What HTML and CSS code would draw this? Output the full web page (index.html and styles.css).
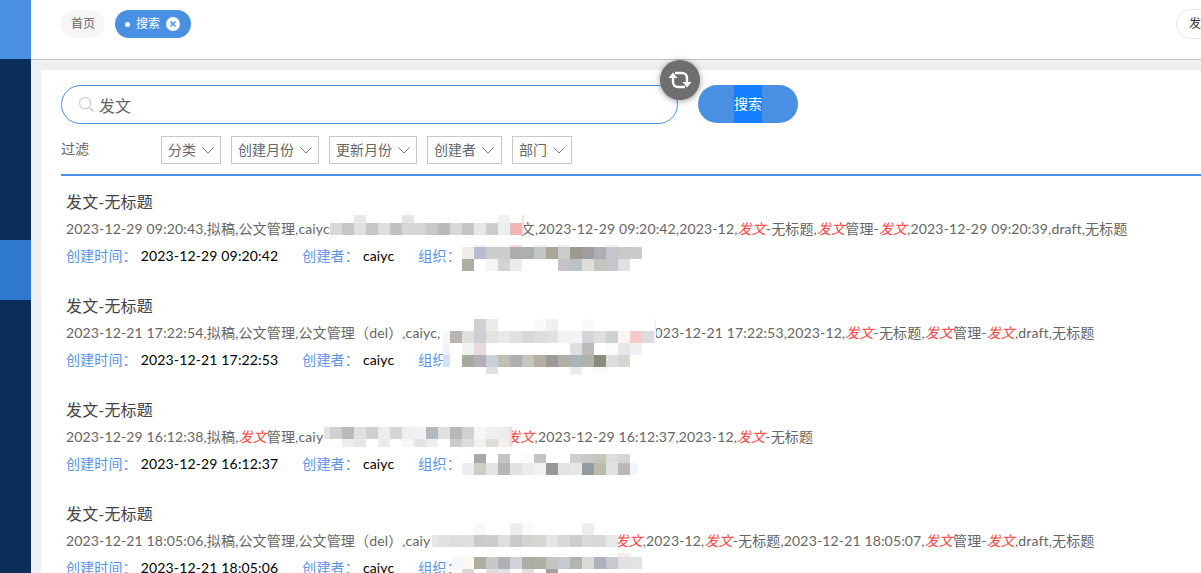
FILE: index.html
```html
<!DOCTYPE html>
<html lang="zh-CN">
<head>
<meta charset="utf-8">
<title>搜索</title>
<link rel="stylesheet" href="styles.css">
</head>
<body>
<div class="app">
  <aside class="sidebar">
    <div class="side-top"></div>
    <div class="side-active"></div>
  </aside>
  <main class="main">
    <header class="tabs">
      <span class="tab">首页</span>
      <span class="tab tab-active"><i class="tab-dot"></i>搜索<svg class="tab-close" viewBox="0 0 14 14"><circle cx="7" cy="7" r="7" fill="#fff"/><path d="M4.500 4.500l5 5M9.500 4.500l-5 5" stroke="#4a90e2" stroke-width="1.500" fill="none"/></svg></span>
      <span class="tab tab-end">发文管理</span>
    </header>
    <section class="content">
      <form class="search">
        <div class="search-box">
          <svg class="search-icon" viewBox="0 0 18 18"><circle cx="7.500" cy="7.500" r="6" stroke="#ccc" stroke-width="1.300" fill="none"/><path d="M12 12l4.500 4.500" stroke="#ccc" stroke-width="1.800" fill="none"/></svg>
          <span class="search-text">发文</span>
        </div>
        <div class="search-btn"><span class="search-btn-label">搜索</span></div>
      </form>
      <div class="filters">
        <span class="filter-label">过滤</span>
        <span class="select">分类<svg class="chev" viewBox="0 0 12 7"><path d="M.5.5l5.500 5.500 5.500-5.500" stroke="#777" fill="none"/></svg></span>
        <span class="select">创建月份<svg class="chev" viewBox="0 0 12 7"><path d="M.5.5l5.500 5.500 5.500-5.500" stroke="#777" fill="none"/></svg></span>
        <span class="select">更新月份<svg class="chev" viewBox="0 0 12 7"><path d="M.5.5l5.500 5.500 5.500-5.500" stroke="#777" fill="none"/></svg></span>
        <span class="select select-wide">创建者<svg class="chev" viewBox="0 0 12 7"><path d="M.5.5l5.500 5.500 5.500-5.500" stroke="#777" fill="none"/></svg></span>
        <span class="select">部门<svg class="chev" viewBox="0 0 12 7"><path d="M.5.5l5.500 5.500 5.500-5.500" stroke="#777" fill="none"/></svg></span>
      </div>
      <div class="results">
        <article class="item">
          <h3 class="item-title">发文-无标题</h3>
          <p class="item-text">2023-12-29 09:20:43,拟稿,公文管理,caiyc<span class="sp sp1"></span>文,2023-12-29 09:20:42,2023-12,<em>发文</em>-无标题,<em>发文</em>管理-<em>发文</em>,2023-12-29 09:20:39,draft,无标题</p>
          <p class="item-meta"><span class="k">创建时间：</span><span class="v">2023-12-29 09:20:42</span><span class="k">创建者：</span><span class="v">caiyc</span><span class="k">组织：</span></p>
        </article>
        <article class="item">
          <h3 class="item-title">发文-无标题</h3>
          <p class="item-text">2023-12-21 17:22:54,拟稿,公文管理,公文管理（del）,caiyc,<span class="sp sp2"></span>023-12-21 17:22:53,2023-12,<em>发文</em>-无标题,<em>发文</em>管理-<em>发文</em>,draft,无标题</p>
          <p class="item-meta"><span class="k">创建时间：</span><span class="v">2023-12-21 17:22:53</span><span class="k">创建者：</span><span class="v">caiyc</span><span class="k">组织：</span></p>
        </article>
        <article class="item">
          <h3 class="item-title">发文-无标题</h3>
          <p class="item-text">2023-12-29 16:12:38,拟稿,<em>发文</em>管理,caiy<span class="sp sp3"></span><em>发文</em>,2023-12-29 16:12:37,2023-12,<em>发文</em>-无标题</p>
          <p class="item-meta"><span class="k">创建时间：</span><span class="v">2023-12-29 16:12:37</span><span class="k">创建者：</span><span class="v">caiyc</span><span class="k">组织：</span></p>
        </article>
        <article class="item">
          <h3 class="item-title">发文-无标题</h3>
          <p class="item-text">2023-12-21 18:05:06,拟稿,公文管理,公文管理（del）,caiy<span class="sp sp4"></span><em>发文</em>,2023-12,<em>发文</em>-无标题,2023-12-21 18:05:07,<em>发文</em>管理-<em>发文</em>,draft,无标题</p>
          <p class="item-meta"><span class="k">创建时间：</span><span class="v">2023-12-21 18:05:06</span><span class="k">创建者：</span><span class="v">caiyc</span><span class="k">组织：</span></p>
        </article>
      </div>
    </section>
  </main>
</div>

<button class="refresh" type="button" aria-label="刷新">
  <svg viewBox="0 0 24 20"><path d="M5 7v5a5 5 0 0 0 5 5h7M19 13V8a5 5 0 0 0-5-5H7" stroke="#fff" stroke-width="2.400" fill="none"/><path d="M.5 8L5 2.500 9.500 8zM14.500 12L19 17.500 23.500 12z" fill="#fff"/></svg>
</button>

<svg class="mosaic" width="1201" height="573" viewBox="0 0 1201 573" shape-rendering="crispEdges" aria-hidden="true">
  <!-- 1: text -->
  <g>
    <rect x="354" y="215" width="12" height="8" fill="#e8e8e8"/><rect x="402" y="215" width="12" height="8" fill="#e4e4e4"/><rect x="498" y="215" width="12" height="8" fill="#f0f0f0"/>
    <rect x="522" y="215" width="2" height="20" fill="#fbdcdc"/>
    <rect x="330" y="223" width="12" height="12" fill="#d9d8d6"/><rect x="342" y="223" width="12" height="12" fill="#c6c6c8"/><rect x="354" y="223" width="12" height="12" fill="#e2e1df"/><rect x="366" y="223" width="12" height="12" fill="#c4c6c8"/><rect x="378" y="223" width="12" height="12" fill="#dededd"/><rect x="390" y="223" width="12" height="12" fill="#c0c2c0"/><rect x="402" y="223" width="12" height="12" fill="#d6d7d7"/><rect x="414" y="223" width="12" height="12" fill="#d7d4d4"/><rect x="426" y="223" width="12" height="12" fill="#c8c8c8"/><rect x="438" y="223" width="12" height="12" fill="#bbbab7"/><rect x="450" y="223" width="12" height="12" fill="#d7d7d7"/><rect x="462" y="223" width="12" height="12" fill="#c6c4c5"/><rect x="474" y="223" width="12" height="12" fill="#e6e6e8"/><rect x="486" y="223" width="12" height="12" fill="#cdcdca"/><rect x="498" y="223" width="12" height="12" fill="#eceded"/><rect x="510" y="223" width="12" height="12" fill="#f3b5b3"/>
  </g>
  <!-- 1: org -->
  <g>
    <rect x="474" y="245" width="12" height="2" fill="#f0f0f5"/><rect x="486" y="245" width="24" height="2" fill="#f8f8f6"/><rect x="510" y="245" width="12" height="2" fill="#fbd6d6"/><rect x="534" y="245" width="12" height="2" fill="#f0f0f0"/><rect x="558" y="245" width="12" height="2" fill="#ededed"/><rect x="606" y="245" width="12" height="2" fill="#f0eff2"/>
    <rect x="462" y="247" width="12" height="12" fill="#f0ecea"/><rect x="474" y="247" width="12" height="12" fill="#b9bad4"/><rect x="486" y="247" width="12" height="12" fill="#cdcdca"/><rect x="498" y="247" width="12" height="12" fill="#cccecb"/><rect x="510" y="247" width="12" height="12" fill="#aeaeb0"/><rect x="522" y="247" width="12" height="12" fill="#abb1b0"/><rect x="534" y="247" width="12" height="12" fill="#c3c5c4"/><rect x="546" y="247" width="12" height="12" fill="#a8a59a"/><rect x="558" y="247" width="12" height="12" fill="#cbcbc9"/><rect x="570" y="247" width="12" height="12" fill="#9f9a90"/><rect x="582" y="247" width="12" height="12" fill="#9e9e9e"/><rect x="594" y="247" width="12" height="12" fill="#aeafb3"/><rect x="606" y="247" width="12" height="12" fill="#c5c5cb"/><rect x="618" y="247" width="12" height="12" fill="#cbc9c7"/><rect x="630" y="247" width="12" height="12" fill="#c8cbca"/>
    <rect x="462" y="259" width="12" height="12" fill="#aeada3"/><rect x="486" y="259" width="12" height="12" fill="#f4f4f4"/><rect x="498" y="259" width="12" height="12" fill="#d2d4d2"/><rect x="510" y="259" width="12" height="12" fill="#eaebee"/><rect x="558" y="259" width="12" height="12" fill="#c4c3c9"/><rect x="570" y="259" width="12" height="12" fill="#b8c3c6"/><rect x="582" y="259" width="12" height="12" fill="#dfdeda"/><rect x="594" y="259" width="12" height="12" fill="#c4c4c0"/><rect x="606" y="259" width="12" height="12" fill="#c6c5cb"/><rect x="618" y="259" width="12" height="12" fill="#e0e0e0"/>
  </g>
  <!-- 2: text and org -->
  <g>
    <rect x="474" y="319" width="12" height="12" fill="#d0d0d0"/><rect x="486" y="319" width="12" height="12" fill="#ebebe9"/><rect x="534" y="319" width="12" height="12" fill="#f9fafb"/><rect x="546" y="319" width="12" height="12" fill="#eff1f1"/><rect x="582" y="319" width="12" height="12" fill="#fafafa"/><rect x="654" y="319" width="2" height="24" fill="#f4f4f4"/>
    <rect x="443" y="331" width="7" height="12" fill="#f8f8fa"/><rect x="450" y="331" width="12" height="12" fill="#b9b4af"/><rect x="462" y="331" width="12" height="12" fill="#dfdfdc"/><rect x="474" y="331" width="12" height="12" fill="#cdcfd2"/><rect x="486" y="331" width="12" height="12" fill="#e3e2e0"/><rect x="498" y="331" width="12" height="12" fill="#e9e9e9"/><rect x="510" y="331" width="12" height="12" fill="#e0e1e3"/><rect x="522" y="331" width="12" height="12" fill="#d8d8d8"/><rect x="534" y="331" width="12" height="12" fill="#dedcda"/><rect x="546" y="331" width="12" height="12" fill="#e2e1dd"/><rect x="558" y="331" width="12" height="12" fill="#f2f2ef"/><rect x="570" y="331" width="12" height="12" fill="#f3f4f6"/><rect x="582" y="331" width="12" height="12" fill="#d5d5d9"/><rect x="594" y="331" width="12" height="12" fill="#dfe0de"/><rect x="606" y="331" width="12" height="12" fill="#d0d1d4"/><rect x="618" y="331" width="12" height="12" fill="#fdf5f4"/><rect x="630" y="331" width="12" height="12" fill="#f6caca"/><rect x="642" y="331" width="12" height="12" fill="#dcdcde"/>
    <rect x="450" y="343" width="12" height="24" fill="#fff"/>
    <rect x="443" y="343" width="7" height="12" fill="#eef3fb"/><rect x="462" y="343" width="12" height="12" fill="#f2f2f2"/><rect x="474" y="343" width="12" height="12" fill="#e7dadd"/><rect x="570" y="343" width="12" height="12" fill="#dfdfdf"/><rect x="582" y="343" width="12" height="12" fill="#bcbcc0"/><rect x="606" y="343" width="12" height="12" fill="#fbfbfb"/><rect x="618" y="343" width="12" height="12" fill="#e6e7ea"/><rect x="630" y="343" width="12" height="12" fill="#eef0f2"/>
    <rect x="443" y="355" width="7" height="12" fill="#d2e0f7"/><rect x="462" y="355" width="12" height="12" fill="#a9aa9f"/><rect x="474" y="355" width="12" height="12" fill="#b6afba"/><rect x="486" y="355" width="12" height="12" fill="#c8d2d6"/><rect x="498" y="355" width="12" height="12" fill="#c2bdb5"/><rect x="510" y="355" width="12" height="12" fill="#afafb3"/><rect x="522" y="355" width="12" height="12" fill="#c4c5bc"/><rect x="534" y="355" width="12" height="12" fill="#b5b0a2"/><rect x="546" y="355" width="12" height="12" fill="#9e9a9a"/><rect x="558" y="355" width="12" height="12" fill="#b0afa8"/><rect x="570" y="355" width="12" height="12" fill="#a9b5b9"/><rect x="582" y="355" width="12" height="12" fill="#b0b2ac"/><rect x="594" y="355" width="12" height="12" fill="#8c8a78"/><rect x="606" y="355" width="12" height="12" fill="#dcdde0"/><rect x="618" y="355" width="12" height="12" fill="#d4d6cf"/>
    <rect x="486" y="367" width="12" height="7" fill="#e0e0e0"/><rect x="570" y="367" width="12" height="7" fill="#eaeaea"/><rect x="594" y="367" width="12" height="7" fill="#fafafa"/>
  </g>
  <!-- 3: text -->
  <g>
    <rect x="324" y="427" width="6" height="12" fill="#e4e4e4"/><rect x="330" y="427" width="12" height="12" fill="#d0d0d0"/><rect x="342" y="427" width="12" height="12" fill="#b8babc"/><rect x="354" y="427" width="12" height="12" fill="#e2e0de"/><rect x="366" y="427" width="12" height="12" fill="#cfd0ce"/><rect x="378" y="427" width="12" height="12" fill="#eeeceb"/><rect x="390" y="427" width="12" height="12" fill="#d3d6d4"/><rect x="402" y="427" width="12" height="12" fill="#f0f0f0"/><rect x="414" y="427" width="12" height="12" fill="#f2f2f5"/><rect x="426" y="427" width="12" height="12" fill="#b2bac0"/><rect x="438" y="427" width="12" height="12" fill="#e0e0e0"/><rect x="450" y="427" width="12" height="12" fill="#b8b7b3"/><rect x="462" y="427" width="12" height="12" fill="#d0d0cd"/><rect x="474" y="427" width="12" height="12" fill="#f5f5f3"/><rect x="486" y="427" width="12" height="12" fill="#efefef"/><rect x="498" y="427" width="12" height="12" fill="#ebebed"/>
    <rect x="510" y="427" width="2" height="20" fill="#fad0d0"/>
    <rect x="342" y="439" width="12" height="8" fill="#efeeec"/><rect x="354" y="439" width="12" height="8" fill="#e6e7e8"/><rect x="378" y="439" width="12" height="8" fill="#ebeaea"/><rect x="402" y="439" width="12" height="8" fill="#f6f6f6"/><rect x="414" y="439" width="12" height="8" fill="#e6e3e4"/><rect x="426" y="439" width="12" height="8" fill="#eeeeee"/><rect x="450" y="439" width="12" height="8" fill="#cacccb"/><rect x="462" y="439" width="12" height="8" fill="#dcdcdc"/><rect x="474" y="439" width="12" height="8" fill="#f2f1ef"/><rect x="486" y="439" width="12" height="8" fill="#dfdbd7"/><rect x="498" y="439" width="12" height="8" fill="#f3eeee"/>
  </g>
  <!-- 3: org -->
  <g>
    <rect x="474" y="454" width="12" height="9" fill="#a7aba6"/><rect x="498" y="454" width="12" height="9" fill="#c2c4c3"/><rect x="522" y="454" width="12" height="9" fill="#f9faf9"/><rect x="534" y="454" width="12" height="9" fill="#c4c4c4"/><rect x="570" y="454" width="12" height="9" fill="#cfcfcd"/><rect x="582" y="454" width="12" height="9" fill="#c8c8c6"/><rect x="594" y="454" width="12" height="9" fill="#c7c6b9"/><rect x="606" y="454" width="12" height="9" fill="#dcdde0"/><rect x="618" y="454" width="12" height="9" fill="#d4d4d6"/>
    <rect x="462" y="463" width="12" height="12" fill="#ededed"/><rect x="474" y="463" width="12" height="12" fill="#cdcec6"/><rect x="486" y="463" width="12" height="12" fill="#e4e4e4"/><rect x="498" y="463" width="12" height="12" fill="#b4b7b4"/><rect x="510" y="463" width="12" height="12" fill="#e2e2e6"/><rect x="522" y="463" width="12" height="12" fill="#ebebeb"/><rect x="534" y="463" width="12" height="12" fill="#f1f1f1"/><rect x="546" y="463" width="12" height="12" fill="#989896"/><rect x="558" y="463" width="12" height="12" fill="#e2e3e6"/><rect x="570" y="463" width="12" height="12" fill="#e6e8e8"/><rect x="582" y="463" width="12" height="12" fill="#949a9f"/><rect x="594" y="463" width="12" height="12" fill="#bcbaab"/><rect x="606" y="463" width="12" height="12" fill="#dde2e0"/><rect x="618" y="463" width="12" height="12" fill="#b9bab7"/><rect x="630" y="463" width="7" height="12" fill="#eef6fc"/>
  </g>
  <!-- 4: text -->
  <g>
    <rect x="474" y="523" width="12" height="12" fill="#f8f8f8"/><rect x="510" y="523" width="12" height="12" fill="#ececec"/><rect x="522" y="523" width="12" height="12" fill="#fafafa"/><rect x="582" y="523" width="12" height="12" fill="#ececec"/>
    <rect x="432" y="535" width="6" height="12" fill="#e8e8e8"/><rect x="438" y="535" width="12" height="12" fill="#e2e2e2"/><rect x="450" y="535" width="12" height="12" fill="#dedddc"/><rect x="462" y="535" width="12" height="12" fill="#dfdfdf"/><rect x="474" y="535" width="12" height="12" fill="#cbc9c9"/><rect x="486" y="535" width="12" height="12" fill="#cfcdcb"/><rect x="498" y="535" width="12" height="12" fill="#dde0de"/><rect x="510" y="535" width="12" height="12" fill="#c8cac9"/><rect x="522" y="535" width="12" height="12" fill="#d5d3d0"/><rect x="534" y="535" width="12" height="12" fill="#d8d6d2"/><rect x="546" y="535" width="12" height="12" fill="#e4e6e4"/><rect x="558" y="535" width="12" height="12" fill="#d8d8d6"/><rect x="570" y="535" width="12" height="12" fill="#cfcecd"/><rect x="582" y="535" width="12" height="12" fill="#dadada"/><rect x="594" y="535" width="12" height="12" fill="#d8d8d8"/><rect x="606" y="535" width="12" height="12" fill="#e8e8e8"/>
  </g>
  <!-- 4: org -->
  <g>
    <rect x="618" y="553" width="12" height="4" fill="#fbe8e8"/>
    <rect x="452" y="557" width="10" height="12" fill="#f4f7fe"/><rect x="462" y="557" width="12" height="12" fill="#fdf8f4"/><rect x="474" y="557" width="12" height="12" fill="#adaea2"/><rect x="486" y="557" width="12" height="12" fill="#c8c9c7"/><rect x="498" y="557" width="12" height="12" fill="#aeb0b4"/><rect x="510" y="557" width="12" height="12" fill="#d2d2d8"/><rect x="522" y="557" width="12" height="12" fill="#aaaea4"/><rect x="534" y="557" width="12" height="12" fill="#aeb0a6"/><rect x="546" y="557" width="12" height="12" fill="#c4c4c2"/><rect x="558" y="557" width="12" height="12" fill="#c4cad0"/><rect x="570" y="557" width="12" height="12" fill="#b2b5ad"/><rect x="582" y="557" width="12" height="12" fill="#d7dad9"/><rect x="594" y="557" width="12" height="12" fill="#aeb1be"/><rect x="606" y="557" width="12" height="12" fill="#c7c9cf"/><rect x="618" y="557" width="12" height="12" fill="#e2e2e2"/><rect x="630" y="557" width="12" height="12" fill="#e2e4e4"/>
    <rect x="462" y="569" width="12" height="4" fill="#d8d8d0"/><rect x="486" y="569" width="12" height="4" fill="#dddddd"/><rect x="498" y="569" width="12" height="4" fill="#e0e2e6"/><rect x="522" y="569" width="12" height="4" fill="#e0e0e0"/><rect x="546" y="569" width="12" height="4" fill="#a8a0a0"/>
  </g>
</svg>
</body>
</html>
```
FILE: styles.css
```css
html, body {
  margin: 0;
  height: 100%;
  overflow: hidden;
}

body {
  position: relative;
  font-family: Lato, "Noto Sans CJK SC", sans-serif;
  font-size: 14px;
  color: #666;
  background: #efefef;
}

.app {
  display: flex;
  height: 573px;
  overflow: hidden;
}

.sidebar {
  flex: 0 0 31px;
  background: #0a2d5a;
}

.side-top {
  height: 59px;
  background: #4a90e2;
}

.side-active {
  height: 60px;
  margin-top: 181px;
  background: #2f78cf;
}

.main {
  flex: 1;
  min-width: 0;
  display: flex;
  flex-direction: column;
}

.tabs {
  flex: 0 0 60px;
  box-sizing: border-box;
  height: 60px;
  display: flex;
  align-items: flex-start;
  gap: 10px;
  padding: 10px 0 0 30px;
  background: #fff;
  border-bottom: 1px solid #c4c4c4;
}

.tab {
  box-sizing: border-box;
  height: 28px;
  line-height: 28px;
  padding: 0 10px;
  border-radius: 14px;
  background: #f6f6f6;
  font-size: 12px;
  white-space: nowrap;
}

.tab-active {
  display: flex;
  align-items: center;
  width: 76px;
  padding-left: 10px;
  background: #4a90e2;
  color: #fff;
}

.tab-dot {
  flex: none;
  width: 5px;
  height: 5px;
  margin-right: 6px;
  border-radius: 50%;
  background: #fff;
}

.tab-close {
  flex: none;
  width: 14px;
  height: 14px;
  margin-left: 6px;
}

.tab-end {
  flex: none;
  width: 86px;
  height: 30px;
  line-height: 28px;
  margin: -1px -61px 0 auto;
  padding: 0 0 0 12px;
  border: 1px solid #e6e6e6;
  border-radius: 15px;
  background: #fff;
  color: #333;
}

.content {
  flex: 1;
  margin: 10px 0 0 10px;
  padding: 15px 0 0 20px;
  background: #fff;
  min-height: 0;
}

.search {
  display: flex;
  gap: 20px;
  margin: 0;
}

.search-box {
  box-sizing: border-box;
  width: 617px;
  height: 39px;
  display: flex;
  align-items: center;
  padding-left: 16px;
  border: 1px solid #4a90e2;
  border-radius: 20px;
}

.search-icon {
  width: 17px;
  height: 17px;
  margin-right: 4px;
}

.search-text {
  font-size: 16px;
  color: #666;
}

.search-btn {
  width: 100px;
  height: 38px;
  display: flex;
  justify-content: center;
  border-radius: 19px;
  background: #4a90e2;
  color: #fff;
}

.search-btn-label {
  display: block;
  width: 28px;
  line-height: 38px;
  background: #1480ff;
}

.filters {
  display: flex;
  align-items: flex-start;
  gap: 10px;
  margin-top: 12px;
  padding-bottom: 10px;
  border-bottom: 2px solid #4a90e2;
}

.filter-label {
  width: 90px;
  line-height: 26px;
}

.select {
  box-sizing: border-box;
  height: 28px;
  display: flex;
  align-items: center;
  padding: 0 6px;
  border: 1px solid #c8c8c8;
  line-height: 26px;
  white-space: nowrap;
}

.select-wide {
  width: 75px;
}

.chev {
  width: 12px;
  height: 7px;
  margin-left: 6px;
}

.results {
  padding: 14px 0 0 5px;
}

.item {
  height: 104px;
  letter-spacing: 0.15px;
}

.item-title {
  margin: 0;
  height: 24px;
  line-height: 24px;
  font-size: 16px;
  font-weight: 400;
  color: #444;
}

.item-text {
  margin: 4px 0 0;
  height: 21px;
  line-height: 21px;
  white-space: nowrap;
}

.item-text em {
  color: #f44;
}

.item-meta {
  display: flex;
  margin: 6px 0 0;
  height: 21px;
  line-height: 21px;
  white-space: nowrap;
}

.k {
  color: #5b93e8;
  margin-right: 4px;
}

.v {
  color: #000;
  margin-right: 24px;
}

.sp {
  display: inline-block;
}

.sp1 { width: 191px; }
.sp2 { width: 214px; }
.sp3 { width: 183px; }
.sp4 { width: 184px; }

.refresh {
  position: absolute;
  left: 660px;
  top: 60px;
  width: 40px;
  height: 40px;
  padding: 0;
  display: flex;
  align-items: center;
  justify-content: center;
  border: 0;
  border-radius: 50%;
  background: #6e6e6e;
  box-shadow: 0 1px 6px rgba(0, 0, 0, 0.4);
}

.refresh svg {
  width: 24px;
  height: 20px;
}

.mosaic {
  position: absolute;
  left: 0;
  top: 0;
  pointer-events: none;
}
```
